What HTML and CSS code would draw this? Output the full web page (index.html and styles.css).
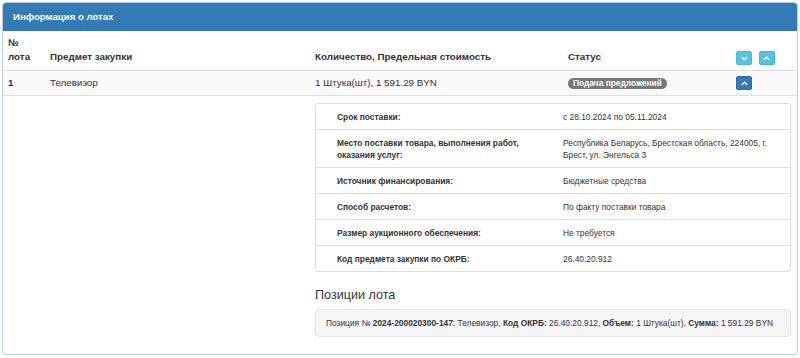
FILE: index.html
```html
<!DOCTYPE html>
<html lang="ru">
<head>
    <meta charset="UTF-8">
    <meta name="viewport" content="width=device-width, initial-scale=1.0">
    <title>Информация о лотах</title>
    <link rel="stylesheet" href="styles.css">
</head>
<body>

    <div class="panel">
        <div class="panel-heading">Информация о лотах</div>

        <table class="lots">
            <colgroup>
                <col class="c-num">
                <col class="c-subject">
                <col class="c-qty">
                <col class="c-status">
                <col>
            </colgroup>
            <thead>
                <tr>
                    <th>№<br>лота</th>
                    <th>Предмет закупки</th>
                    <th>Количество, Предельная стоимость</th>
                    <th>Статус</th>
                    <th>
                        <span class="btn btn-info">
                            <svg viewBox="0 0 10 10"><path d="M2 3.5 L5 6.5 L8 3.5"/></svg>
                        </span>
                        <span class="btn btn-info">
                            <svg viewBox="0 0 10 10"><path d="M2 6.5 L5 3.5 L8 6.5"/></svg>
                        </span>
                    </th>
                </tr>
            </thead>
            <tbody>
                <tr class="lot-row">
                    <td><b>1</b></td>
                    <td>Телевизор</td>
                    <td>1 Штука(шт), 1 591.29 BYN</td>
                    <td><span class="badge">Подача предложений</span></td>
                    <td>
                        <span class="btn btn-primary">
                            <svg viewBox="0 0 10 10"><path d="M2 6.5 L5 3.5 L8 6.5"/></svg>
                        </span>
                    </td>
                </tr>
                <tr class="details-row">
                    <td colspan="2"></td>
                    <td colspan="3" class="details-cell">
                        <table class="details">
                            <tr>
                                <th>Срок поставки:</th>
                                <td>с 28.10.2024 по 05.11.2024</td>
                            </tr>
                            <tr>
                                <th>Место поставки товара, выполнения работ, оказания услуг:</th>
                                <td>Республика Беларусь, Брестская область, 224005, г. Брест, ул. Энгельса 3</td>
                            </tr>
                            <tr>
                                <th>Источник финансирования:</th>
                                <td>Бюджетные средства</td>
                            </tr>
                            <tr>
                                <th>Способ расчетов:</th>
                                <td>По факту поставки товара</td>
                            </tr>
                            <tr>
                                <th>Размер аукционного обеспечения:</th>
                                <td>Не требуется</td>
                            </tr>
                            <tr>
                                <th>Код предмета закупки по ОКРБ:</th>
                                <td>26.40.20.912</td>
                            </tr>
                        </table>

                        <h4>Позиции лота</h4>
                        <div class="well">
                            Позиция № <b>2024-200020300-147</b>: Телевизор, <b>Код ОКРБ:</b> 26.40.20.912, <b>Объем:</b> 1 Штука(шт), <b>Сумма:</b> 1 591.29 BYN
                        </div>
                    </td>
                </tr>
            </tbody>
        </table>
    </div>

</body>
</html>
```

FILE: styles.css
```css
body {
    font-family: 'Liberation Sans', Arial, sans-serif;
    font-size: 9.8px;
    color: #333;
    background-color: #fff;
    margin: 0;
    padding: 2px 2px 0 2px;
}
.panel {
    border: 1px solid #b9cde3;
    border-radius: 4px;
    overflow: hidden;
}
.panel-heading {
    background-color: #337ab7;
    color: white;
    font-weight: bold;
    font-size: 9.6px;
    line-height: 16px;
    padding: 6px 10px 6px 10px;
}
.lots {
    width: 100%;
    border-collapse: collapse;
    table-layout: fixed;
}
.c-num { width: 42px; }
.c-subject { width: 265px; }
.c-qty { width: 253px; }
.c-status { width: 167px; }
.lots > thead > tr > th {
    text-align: left;
    vertical-align: bottom;
    line-height: 14px;
    padding: 5px 5px 6px 5px;
    border-bottom: 1px solid #ddd;
}
.lots > thead > tr > th:last-child {
    padding-bottom: 5px;
}
.lot-row td {
    background-color: #f9f9f9;
    line-height: 14px;
    padding: 5px 5px;
    border-bottom: 1px solid #ddd;
    vertical-align: middle;
}
.badge {
    display: inline-block;
    background-color: #777;
    color: white;
    font-size: 8.4px;
    font-weight: bold;
    line-height: 10px;
    padding: 0 5px 1px 5px;
    border-radius: 6px;
    vertical-align: middle;
}
.btn {
    display: inline-flex;
    align-items: center;
    justify-content: center;
    width: 16px;
    height: 14px;
    box-sizing: border-box;
    border-radius: 2px;
    margin-left: 1px;
    margin-right: 3px;
    vertical-align: middle;
}
.btn svg {
    width: 9px;
    height: 9px;
    fill: none;
    stroke: white;
    stroke-width: 1.6;
}
.btn-info {
    background-color: #5bc0de;
    border: 1px solid #46b8da;
}
.btn-primary {
    background-color: #337ab7;
    border: 1px solid #2e6da4;
}
.details-cell {
    padding: 7px 6px 17px 5px;
}
.details {
    width: 100%;
    border-collapse: separate;
    border-spacing: 0;
    border: 1px solid #ddd;
    border-radius: 3px;
    table-layout: fixed;
    font-size: 8.4px;
    line-height: 12px;
}
.details th,
.details td {
    text-align: left;
    vertical-align: middle;
    padding: 7px 10px 6px 10px;
    border-top: 1px solid #ddd;
}
.details tr:first-child th,
.details tr:first-child td {
    border-top: none;
}
.details th {
    padding-left: 21px;
    font-weight: bold;
}
h4 {
    font-size: 12.6px;
    font-weight: normal;
    line-height: 15px;
    margin: 16px 0 6px 0;
}
.well {
    background-color: #f5f5f5;
    border: 1px solid #e3e3e3;
    border-radius: 4px;
    font-size: 8.4px;
    line-height: 12px;
    padding: 7px 10px;
}
```
